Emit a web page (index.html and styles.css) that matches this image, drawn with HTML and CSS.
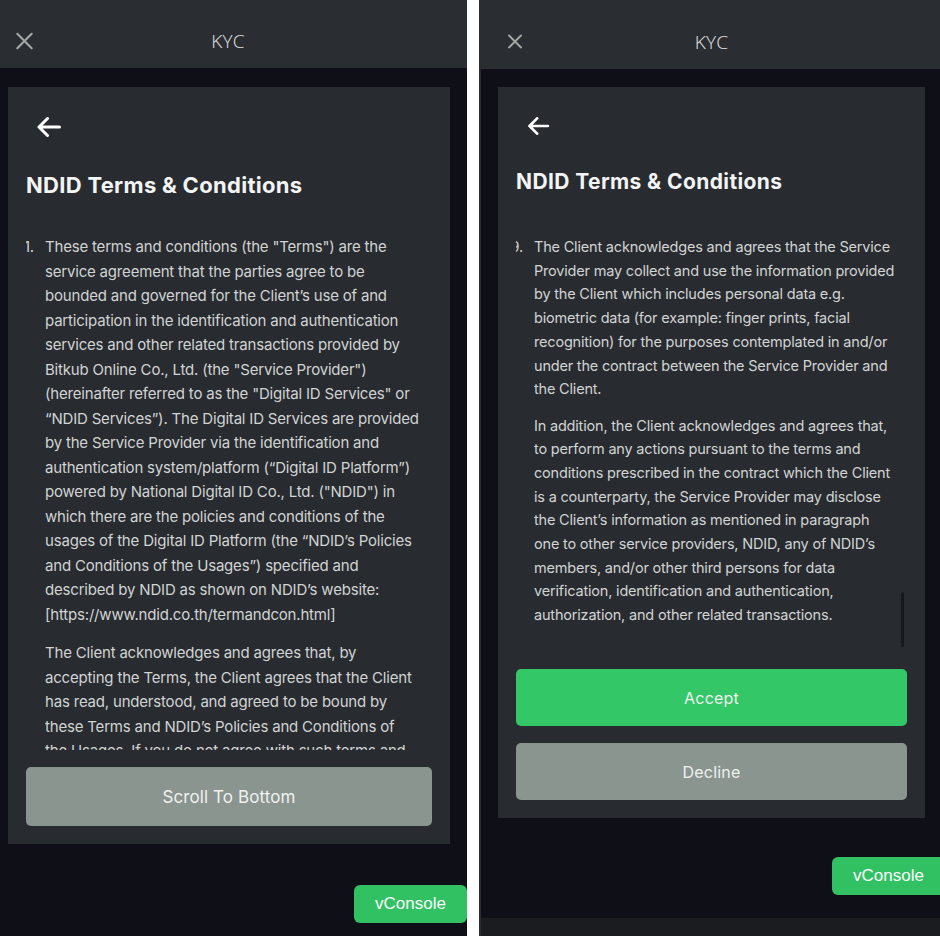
FILE: index.html
```html
<!DOCTYPE html>
<html lang="en">
<head>
<meta charset="utf-8">
<title>KYC – NDID Terms &amp; Conditions</title>
<link rel="stylesheet" href="styles.css">
</head>
<body>
<div class="screens">

  <section class="phone phone--left">
    <header class="topbar">
      <button class="icon-btn close" aria-label="Close">
        <svg viewBox="0 0 20 20" width="19" height="18"><path d="M2 2L18 18M18 2L2 18" fill="none" stroke="currentColor" stroke-width="2.3" stroke-linecap="round"/></svg>
      </button>
      <h1 class="topbar__title">KYC</h1>
      <span></span>
    </header>
    <main class="stage">
      <div class="card">
        <button class="icon-btn back" aria-label="Back">
          <svg viewBox="0 0 24 20" width="24" height="20"><path d="M22.5 10H2M10.5 1.5L2 10l8.5 8.5" fill="none" stroke="currentColor" stroke-width="3" stroke-linecap="round" stroke-linejoin="round"/></svg>
        </button>
        <h2 class="card__title">NDID Terms &amp; Conditions</h2>
        <div class="terms">
          <ol class="terms__list">
            <li>
              <p>These terms and conditions (the "Terms") are the service agreement that the parties agree to be bounded and governed for the Client’s use of and participation in the identification and authentication services and other related transactions provided by Bitkub Online Co., Ltd. (the "Service Provider") (hereinafter referred to as the "Digital ID Services" or “NDID Services”). The Digital ID Services are provided by the Service Provider via the identification and authentication system/platform (“Digital ID Platform”) powered by National Digital ID Co., Ltd. ("NDID") in which there are the policies and conditions of the usages of the Digital ID Platform (the “NDID’s Policies and Conditions of the Usages”) specified and described by NDID as shown on NDID’s website: [https://www.ndid.co.th/termandcon.html]</p>
              <p>The Client acknowledges and agrees that, by accepting the Terms, the Client agrees that the Client has read, understood, and agreed to be bound by these Terms and NDID’s Policies and Conditions of the Usages. If you do not agree with such terms and conditions, please do not proceed further.</p>
            </li>
          </ol>
        </div>
        <div class="actions">
          <button class="btn btn--muted">Scroll To Bottom</button>
        </div>
      </div>
    </main>
    <button class="vconsole">vConsole</button>
  </section>

  <section class="phone phone--right">
    <header class="topbar">
      <button class="icon-btn close" aria-label="Close">
        <svg viewBox="0 0 20 20" width="16" height="15"><path d="M2 2L18 18M18 2L2 18" fill="none" stroke="currentColor" stroke-width="2.5" stroke-linecap="round"/></svg>
      </button>
      <h1 class="topbar__title">KYC</h1>
      <span></span>
    </header>
    <main class="stage">
      <div class="card">
        <button class="icon-btn back" aria-label="Back">
          <svg viewBox="0 0 24 20" width="23" height="18"><path d="M22.5 10H2M10.5 1.5L2 10l8.5 8.5" fill="none" stroke="currentColor" stroke-width="3" stroke-linecap="round" stroke-linejoin="round"/></svg>
        </button>
        <h2 class="card__title">NDID Terms &amp; Conditions</h2>
        <div class="terms">
          <ol class="terms__list" start="9">
            <li>
              <p>The Client acknowledges and agrees that the Service Provider may collect and use the information provided by the Client which includes personal data e.g. biometric data (for example: finger prints, facial recognition) for the purposes contemplated in and/or under the contract between the Service Provider and the Client.</p>
              <p>In addition, the Client acknowledges and agrees that, to perform any actions pursuant to the terms and conditions prescribed in the contract which the Client is a counterparty, the Service Provider may disclose the Client’s information as mentioned in paragraph one to other service providers, NDID, any of NDID’s members, and/or other third persons for data verification, identification and authentication, authorization, and other related transactions.</p>
            </li>
          </ol>
          <span class="terms__thumb"></span>
        </div>
        <div class="actions">
          <button class="btn btn--primary">Accept</button>
          <button class="btn btn--muted">Decline</button>
        </div>
      </div>
    </main>
    <footer class="homebar"></footer>
    <button class="vconsole">vConsole</button>
  </section>

</div>
</body>
</html>
```

FILE: styles.css
```css
* { box-sizing: border-box; margin: 0; padding: 0; }

html, body {
  width: 940px;
  height: 936px;
  overflow: hidden;
  background: #ffffff;
}

body {
  font-family: Inter, "Noto Sans", sans-serif;
  -webkit-font-smoothing: antialiased;
}

button {
  font: inherit;
  border: 0;
  background: none;
  color: inherit;
  cursor: pointer;
}

.screens {
  display: flex;
  gap: 12px;
  height: 936px;
}

.phone {
  position: relative;
  display: flex;
  flex-direction: column;
  height: 936px;
  overflow: hidden;
  background: #0f0f17;
}

.phone--left { width: 467px; }
.phone--right { width: 461px; border-left: 2px solid #2b2c30; }

/* top bar */
.topbar {
  flex: none;
  display: grid;
  grid-template-columns: 1fr auto 1fr;
  align-items: center;
  background: #2a2d32;
}
.phone--left .topbar { height: 68px; padding: 14px 26px 0 15px; }
.phone--right .topbar { height: 69px; padding: 14px 24px 0 26px; }

.icon-btn { display: flex; line-height: 0; }
.close { justify-self: start; color: #a4a9a6; }

.topbar__title {
  font-family: "Open Sans", "Noto Sans", sans-serif;
  font-weight: 300;
  font-size: 19px;
  line-height: 26px;
  color: #e2e3e3;
  letter-spacing: 0.2px;
}

/* stage & card */
.stage { flex: 1; min-height: 0; }

.card {
  display: flex;
  flex-direction: column;
  background: #282b30;
  padding: 30px 18px 18px;
}
.phone--left .card { margin: 19px 17px 0 8px; }
.phone--right .card { margin: 18px 15px 0 17px; }

.back { align-self: flex-start; margin-left: 11px; color: #ffffff; }

.card__title {
  font-weight: 700;
  color: #f3f4f4;
}
.phone--left .card__title { margin-top: 34px; font-size: 22px; line-height: 28px; letter-spacing: 0.3px; }
.phone--right .card__title { margin-top: 33px; font-size: 21px; line-height: 27px; letter-spacing: 0.4px; }

/* terms text */
.terms {
  position: relative;
  overflow: hidden;
  color: #d1d4d3;
  letter-spacing: -0.19px;
}
.phone--left .terms { margin-top: 36px; height: 515px; font-size: 15px; line-height: 24.5px; padding-right: 12px; }
.phone--right .terms { margin-top: 40px; height: 415px; font-size: 14.5px; line-height: 23.7px; padding-right: 11px; }

.terms__list { list-style: none; counter-reset: item; }
.terms__list[start="9"] { counter-reset: item 8; }

.terms__list li {
  counter-increment: item;
  display: grid;
  grid-template-columns: 19px 1fr;
}
.phone--right .terms__list li { grid-template-columns: 18px 1fr; }

.terms__list li::before {
  content: counter(item) ".";
  grid-column: 1;
  grid-row: 1;
  justify-self: end;
  padding-right: 11px;
}

.terms__list p { grid-column: 2; }
.phone--left .terms__list p + p { margin-top: 14px; }
.phone--right .terms__list p + p { margin-top: 12.6px; }

.terms__thumb {
  position: absolute;
  right: 3px;
  top: 357px;
  width: 3px;
  height: 55px;
  border-radius: 2px;
  background: #17181c;
}

/* actions */
.actions { display: flex; flex-direction: column; gap: 17px; }
.phone--left .actions { margin-top: 17px; }
.phone--right .actions { margin-top: 19px; }

.btn {
  border-radius: 5px;
  color: #eef1ef;
  text-align: center;
  letter-spacing: 0.2px;
}
.phone--left .btn { height: 59px; font-size: 17px; letter-spacing: 0.1px; }
.phone--right .btn { height: 57px; font-size: 16px; }

.btn--muted { background: #8b958f; }
.btn--primary { background: #34c768; }

/* bottom strip */
.homebar { flex: none; height: 18px; background: #1b1c1f; }

/* vConsole floating switch */
.vconsole {
  position: absolute;
  width: 113px;
  height: 38px;
  border-radius: 6px;
  background: #31c162;
  color: #ffffff;
  font-family: "Liberation Sans", Arial, sans-serif;
  font-size: 17px;
}
.phone--left .vconsole { right: 0; bottom: 13px; }
.phone--right .vconsole { right: -5px; bottom: 41px; }
```
